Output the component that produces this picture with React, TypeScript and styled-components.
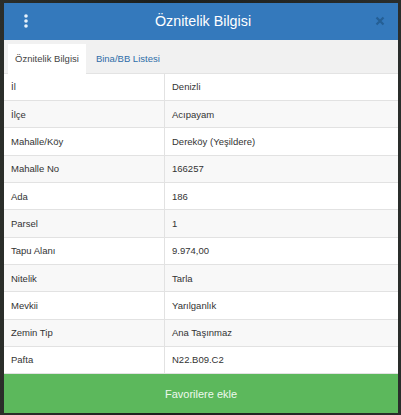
import React from "react";
import styled, { createGlobalStyle } from "styled-components";

const GlobalStyle = createGlobalStyle`
  html, body {
    margin: 0;
    padding: 0;
    background: #1f2320;
    font-family: "Liberation Sans", Arial, sans-serif;
  }
`;

const Backdrop = styled.div`
  width: 401px;
  height: 415px;
  padding: 3px 3px 2px 4px;
  box-sizing: border-box;
  background: linear-gradient(90deg, #2b2e2a 0%, #1c1f1d 40%, #2a2d2b 100%);
`;

const Modal = styled.div`
  display: flex;
  flex-direction: column;
  height: 100%;
  background: #fff;
`;

const Header = styled.div`
  display: flex;
  align-items: center;
  justify-content: space-between;
  height: 37px;
  padding: 0 10px 0 14px;
  background: #3479bc;
  color: #fff;
  > h1 {
    margin: 0;
    font-size: 14.3px;
    font-weight: normal;
  }
`;

const IconButton = styled.span<{ $muted?: boolean }>`
  display: flex;
  align-items: center;
  justify-content: center;
  width: 16px;
  height: 16px;
  color: ${(p) => (p.$muted ? "#245f95" : "#e8f2fb")};
`;

const TabBar = styled.div`
  display: flex;
  align-items: flex-end;
  gap: 3px;
  height: 34px;
  padding-left: 4px;
  background: #f1f1f1;
  border-bottom: 1px solid #e3e3e3;
  box-sizing: border-box;
`;

const Tab = styled.div<{ $active?: boolean }>`
  height: 30px;
  padding: 0 7px;
  display: flex;
  align-items: center;
  font-size: 9.5px;
  color: ${(p) => (p.$active ? "#444" : "#2f6ea8")};
  background: ${(p) => (p.$active ? "#fff" : "transparent")};
  margin-bottom: -1px;
`;

const Table = styled.div`
  flex: 1;
  display: flex;
  flex-direction: column;
`;

const Row = styled.div<{ $striped?: boolean }>`
  display: grid;
  grid-template-columns: 160px 1fr;
  height: 27.3px;
  background: ${(p) => (p.$striped ? "#f8f8f8" : "#fff")};
  border-bottom: 1px solid #e2e2e2;
  box-sizing: border-box;
  font-size: 9.5px;
  color: #333;
  > div {
    display: flex;
    align-items: center;
    padding-left: 7px;
  }
  > div + div {
    border-left: 1px solid #e2e2e2;
  }
`;

const FavButton = styled.button`
  height: 39px;
  border: none;
  background: #5cb85c;
  color: #eef8ee;
  font-family: "Liberation Sans", Arial, sans-serif;
  font-size: 11px;
  cursor: pointer;
`;

const rows: [string, string][] = [
  ["İl", "Denizli"],
  ["İlçe", "Acıpayam"],
  ["Mahalle/Köy", "Dereköy (Yeşildere)"],
  ["Mahalle No", "166257"],
  ["Ada", "186"],
  ["Parsel", "1"],
  ["Tapu Alanı", "9.974,00"],
  ["Nitelik", "Tarla"],
  ["Mevkii", "Yarılganlık"],
  ["Zemin Tip", "Ana Taşınmaz"],
  ["Pafta", "N22.B09.C2"],
];

export default function App() {
  return (
    <>
      <GlobalStyle />
      <Backdrop>
        <Modal>
          <Header>
            <IconButton>
              <svg width="6" height="14" viewBox="0 0 6 14">
                <circle cx="3" cy="2" r="1.8" fill="currentColor" />
                <circle cx="3" cy="7" r="1.8" fill="currentColor" />
                <circle cx="3" cy="12" r="1.8" fill="currentColor" />
              </svg>
            </IconButton>
            <h1>Öznitelik Bilgisi</h1>
            <IconButton $muted>
              <svg width="10" height="10" viewBox="0 0 10 10">
                <path d="M1.5 1.5 L8.5 8.5 M8.5 1.5 L1.5 8.5" stroke="currentColor" strokeWidth="2.2" />
              </svg>
            </IconButton>
          </Header>
          <TabBar>
            <Tab $active>Öznitelik Bilgisi</Tab>
            <Tab>Bina/BB Listesi</Tab>
          </TabBar>
          <Table>
            {rows.map(([k, v], i) => (
              <Row key={k} $striped={i % 2 === 1}>
                <div>{k}</div>
                <div>{v}</div>
              </Row>
            ))}
          </Table>
          <FavButton>Favorilere ekle</FavButton>
        </Modal>
      </Backdrop>
    </>
  );
}
